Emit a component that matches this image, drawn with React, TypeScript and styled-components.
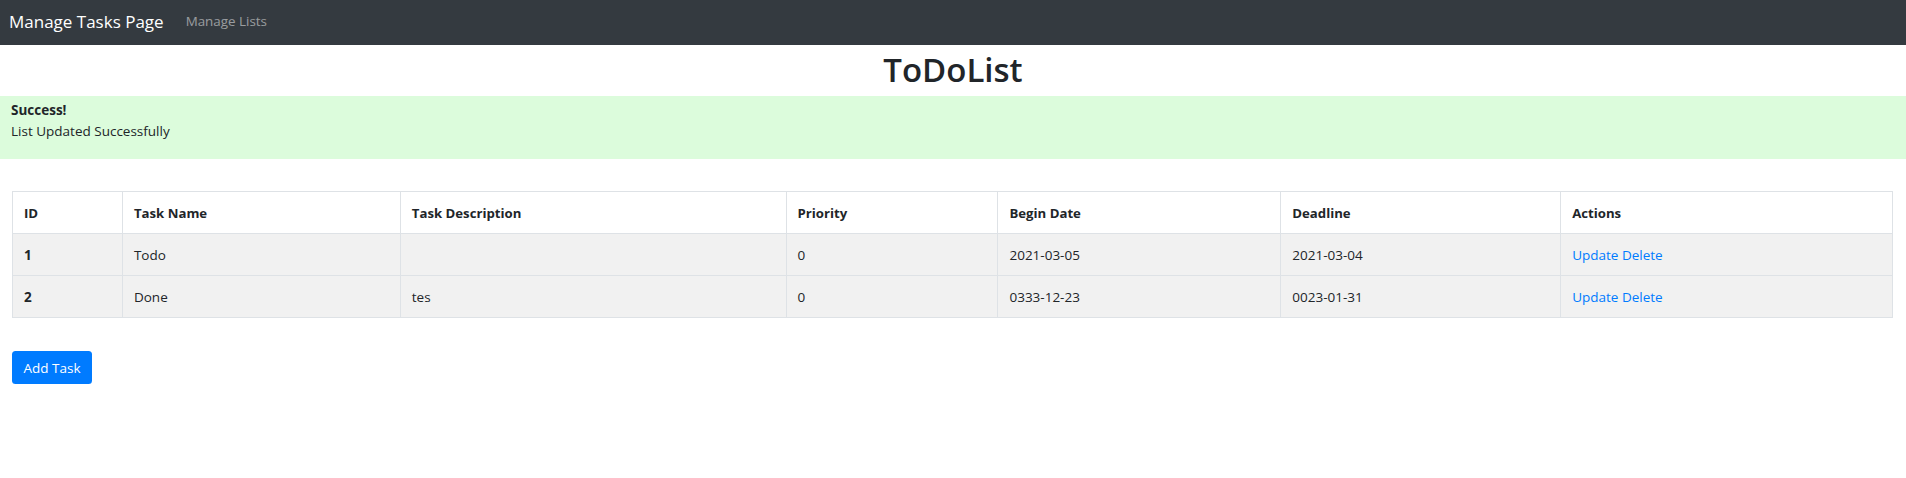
import React from "react";
import styled, { createGlobalStyle } from "styled-components";

const GlobalStyle = createGlobalStyle`
  html, body {
    margin: 0;
    padding: 0;
    background: #ffffff;
    font-family: "Open Sans", "Noto Sans", "Liberation Sans", sans-serif;
    color: #212529;
  }
  * { box-sizing: border-box; }
`;

const Navbar = styled.nav`
  height: 45px;
  background: #343a40;
  display: flex;
  align-items: center;
  padding: 0 9px 3px;
`;

const Brand = styled.a`
  font-size: 17px;
  color: #ffffff;
  text-decoration: none;
  margin-right: 22px;
  white-space: nowrap;
`;

const NavLink = styled.a`
  font-size: 13.4px;
  color: rgba(255, 255, 255, 0.5);
  text-decoration: none;
`;

const Title = styled.h1`
  margin: 0;
  height: 51px;
  line-height: 49px;
  font-size: 33px;
  font-weight: 600;
  text-align: center;
  color: #212529;
`;

const Alert = styled.div`
  background: #dcfcdc;
  height: 63px;
  padding: 4px 11px;
  font-size: 13.5px;
  line-height: 20.5px;
  color: #212529;
`;

const Strong = styled.strong`
  display: block;
  font-weight: 700;
`;

const Content = styled.main`
  padding: 32px 13px 0 12px;
`;

const Table = styled.table`
  width: 100%;
  border-collapse: collapse;
  border: 1px solid #dee2e6;
  font-size: 13.5px;
  color: #212529;
`;

const Th = styled.th<{ $w: number }>`
  width: ${(p) => p.$w}px;
  height: 42px;
  padding: 0 11px;
  text-align: left;
  font-size: 13.2px;
  font-weight: 700;
  border: 1px solid #dee2e6;
  background: #ffffff;
`;

const Row = styled.tr`
  background: #f1f1f1;
`;

const Td = styled.td<{ $bold?: boolean }>`
  height: 42px;
  padding: 0 11px;
  border: 1px solid #dee2e6;
  font-weight: ${(p) => (p.$bold ? 700 : 400)};
`;

const Link = styled.a`
  color: #007bff;
  text-decoration: none;
`;

const Button = styled.button`
  margin-top: 33px;
  width: 80px;
  height: 33px;
  border: none;
  border-radius: 3.5px;
  background: #007bff;
  color: #ffffff;
  font-family: inherit;
  font-size: 13.5px;
  padding: 0;
  cursor: pointer;
`;

const columns: { label: string; w: number }[] = [
  { label: "ID", w: 110 },
  { label: "Task Name", w: 278 },
  { label: "Task Description", w: 386 },
  { label: "Priority", w: 212 },
  { label: "Begin Date", w: 283 },
  { label: "Deadline", w: 280 },
  { label: "Actions", w: 332 },
];

const tasks = [
  { id: 1, name: "Todo", desc: "", priority: 0, begin: "2021-03-05", deadline: "2021-03-04" },
  { id: 2, name: "Done", desc: "tes", priority: 0, begin: "0333-12-23", deadline: "0023-01-31" },
];

export default function App() {
  return (
    <>
      <GlobalStyle />
      <Navbar>
        <Brand href="#">Manage Tasks Page</Brand>
        <NavLink href="#">Manage Lists</NavLink>
      </Navbar>
      <Title>ToDoList</Title>
      <Alert>
        <Strong>Success!</Strong>
        List Updated Successfully
      </Alert>
      <Content>
        <Table>
          <thead>
            <tr>
              {columns.map((c) => (
                <Th key={c.label} $w={c.w}>
                  {c.label}
                </Th>
              ))}
            </tr>
          </thead>
          <tbody>
            {tasks.map((t) => (
              <Row key={t.id}>
                <Td $bold>{t.id}</Td>
                <Td>{t.name}</Td>
                <Td>{t.desc}</Td>
                <Td>{t.priority}</Td>
                <Td>{t.begin}</Td>
                <Td>{t.deadline}</Td>
                <Td>
                  <Link href="#">Update</Link> <Link href="#">Delete</Link>
                </Td>
              </Row>
            ))}
          </tbody>
        </Table>
        <Button>Add Task</Button>
      </Content>
    </>
  );
}
